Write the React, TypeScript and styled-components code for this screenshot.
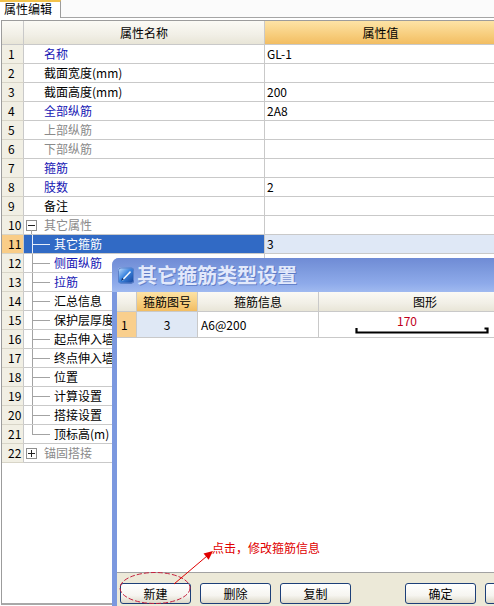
import React from "react"
import styled, { createGlobalStyle, css } from "styled-components"

type Tone = "blue" | "black" | "gray"

interface PropRow {
  name: string
  tone: Tone
  value?: string
  toggle?: "open" | "closed"
  child?: boolean
  last?: boolean
  selected?: boolean
}

const propRows: PropRow[] = [
  { name: "名称", tone: "blue", value: "GL-1" },
  { name: "截面宽度(mm)", tone: "black" },
  { name: "截面高度(mm)", tone: "black", value: "200" },
  { name: "全部纵筋", tone: "blue", value: "2A8" },
  { name: "上部纵筋", tone: "gray" },
  { name: "下部纵筋", tone: "gray" },
  { name: "箍筋", tone: "blue" },
  { name: "肢数", tone: "blue", value: "2" },
  { name: "备注", tone: "black" },
  { name: "其它属性", tone: "gray", toggle: "open" },
  { name: "其它箍筋", tone: "blue", child: true, selected: true, value: "3" },
  { name: "侧面纵筋", tone: "blue", child: true },
  { name: "拉筋", tone: "blue", child: true },
  { name: "汇总信息", tone: "black", child: true },
  { name: "保护层厚度", tone: "black", child: true },
  { name: "起点伸入墙", tone: "black", child: true },
  { name: "终点伸入墙", tone: "black", child: true },
  { name: "位置", tone: "black", child: true },
  { name: "计算设置", tone: "black", child: true },
  { name: "搭接设置", tone: "black", child: true },
  { name: "顶标高(m)", tone: "black", child: true, last: true },
  { name: "锚固搭接", tone: "gray", toggle: "closed" },
]

const toneColor: Record<Tone, string> = {
  blue: "#1616b4",
  black: "#000",
  gray: "#8a8a8a",
}

const GlobalStyle = createGlobalStyle`
  *, *::before, *::after { box-sizing: border-box; }
  html, body { margin: 0; padding: 0; background: #fff; overflow: hidden; }
  body {
    font-family: "Noto Sans CJK SC", "Liberation Sans", sans-serif;
    font-size: 12px;
    color: #000;
  }
`

const Page = styled.div`
  position: relative;
  width: 494px;
  height: 606px;
  overflow: hidden;
  background: #fff;
  font-family: "Noto Sans CJK SC", "Liberation Sans", sans-serif;
  font-size: 12px;
`

/* ---------- tab strip ---------- */

const TabStrip = styled.div`
  display: flex;
  height: 18px;
`

const Tab = styled.div`
  width: 61px;
  height: 18px;
  padding-left: 4px;
  border-top: 2px solid #f2c24c;
  border-right: 1px solid #9c9c9c;
  background: #fff;
  font-size: 12px;
  line-height: 14px;
`

const TabFill = styled.div`
  flex: 1;
  border-bottom: 1px solid #a5a5a5;
  background: #fbfbfb;
`

/* ---------- property grid ---------- */

const Grid = styled.div`
  margin: 2px 0 0 1px;
  width: 496px;
  height: 585px;
  border: 1px solid #9c9c9c;
  border-right: none;
  border-bottom: 2px solid #a8a8a8;
`

const GridRow = styled.div<{ $header?: boolean }>`
  display: grid;
  grid-template-columns: 22px 241px 1fr;
  height: ${(p) => (p.$header ? "24px" : "19px")};
`

const cellBase = css`
  display: flex;
  align-items: center;
  overflow: hidden;
  white-space: nowrap;
  border-right: 1px solid #c9c9c9;
  border-bottom: 1px solid #c9c9c9;
  line-height: 14px;
`

const HeadCell = styled.div<{ $accent?: boolean }>`
  ${cellBase};
  justify-content: center;
  background: ${(p) =>
    p.$accent
      ? "linear-gradient(#fde3a6, #f7cd7c 60%, #f2bd62)"
      : "linear-gradient(#fbfaf5, #f1efe6 60%, #e8e5d7)"};
`

const NumCell = styled.div<{ $active?: boolean }>`
  ${cellBase};
  padding-left: 6px;
  background: ${(p) => (p.$active ? "#f9cd88" : "#f1efe4")};
  border-bottom-color: #d8d5c8;
`

const NameCell = styled.div<{ $tone: Tone; $selected?: boolean; $top?: boolean }>`
  ${cellBase};
  align-items: stretch;
  padding-left: ${(p) => (p.$top ? "20px" : "0")};
  color: ${(p) => (p.$selected ? "#fff" : toneColor[p.$tone])};
  background: ${(p) => (p.$selected ? "#316ac5" : "#fff")};
  > span.label {
    display: flex;
    align-items: center;
  }
`

const ValueCell = styled.div<{ $selected?: boolean }>`
  ${cellBase};
  padding-left: 2px;
  background: ${(p) => (p.$selected ? "#dfe8f6" : "#fff")};
`

const Guide = styled.span<{ $last?: boolean; $selected?: boolean }>`
  position: relative;
  width: 22px;
  margin-left: 8px;
  flex: none;
  &::before {
    content: "";
    position: absolute;
    left: 0;
    top: 0;
    bottom: ${(p) => (p.$last ? "50%" : "-1px")};
    width: 1px;
    background: ${(p) => (p.$selected ? "#e8eefa" : "#a3a3a3")};
  }
  &::after {
    content: "";
    position: absolute;
    left: 0;
    top: 50%;
    width: 18px;
    height: 1px;
    background: ${(p) => (p.$selected ? "#e8eefa" : "#a3a3a3")};
  }
`

const ToggleWrap = styled.span<{ $open?: boolean }>`
  position: relative;
  display: flex;
  align-items: center;
  width: 11px;
  margin: 0 7px 0 2px;
  flex: none;
  &::after {
    content: "";
    display: ${(p) => (p.$open ? "block" : "none")};
    position: absolute;
    left: 5px;
    top: calc(50% + 5px);
    bottom: -1px;
    width: 1px;
    background: #a3a3a3;
  }
`

const ToggleBox = styled.span<{ $open?: boolean }>`
  position: relative;
  width: 11px;
  height: 11px;
  border: 1px solid #8e8e8e;
  background: #fff;
  &::before {
    content: "";
    position: absolute;
    left: 1px;
    right: 1px;
    top: 4px;
    height: 1px;
    background: #222;
  }
  &::after {
    content: "";
    display: ${(p) => (p.$open ? "none" : "block")};
    position: absolute;
    top: 1px;
    bottom: 1px;
    left: 4px;
    width: 1px;
    background: #222;
  }
`

/* ---------- dialog ---------- */

const Dialog = styled.div`
  position: absolute;
  left: 112px;
  top: 258px;
  width: 420px;
  display: flex;
  flex-direction: column;
  border-radius: 7px 0 0 0;
  overflow: hidden;
  background: #7b98df;
`

const TitleBar = styled.div`
  height: 34px;
  display: flex;
  align-items: center;
  gap: 3px;
  padding-left: 6px;
  background: linear-gradient(#6f8bd5, #7d9ade 35%, #8eaaea 75%, #a0baf0);
`

const DialogTitle = styled.span`
  font-size: 20px;
  font-weight: bold;
  line-height: 22px;
  color: #e2e9fb;
  text-shadow: 1px 1px 0 rgba(45, 75, 160, 0.45);
`

const DialogBody = styled.div`
  margin-left: 5px;
  display: flex;
  flex-direction: column;
  background: #fff;
`

const InnerRow = styled.div<{ $header?: boolean }>`
  display: grid;
  grid-template-columns: 20px 61px 121px 1fr;
  height: ${(p) => (p.$header ? "20px" : "26px")};
`

const InnerNum = styled.div`
  ${cellBase};
  padding-left: 4px;
  background: #f9cf8d;
`

const InnerCell = styled.div<{ $center?: boolean; $picked?: boolean }>`
  ${cellBase};
  justify-content: ${(p) => (p.$center ? "center" : "flex-start")};
  padding-left: ${(p) => (p.$center ? "0" : "3px")};
  background: ${(p) => (p.$picked ? "#dfe8f5" : "#fff")};
`

const ShapeCell = styled.div`
  ${cellBase};
  flex-direction: column;
  align-items: flex-start;
  justify-content: center;
  padding-left: 36px;
`

const Dimension = styled.span`
  margin-left: 42px;
  color: #c0001a;
  font-size: 12px;
  line-height: 12px;
`

const EmptyArea = styled.div`
  height: 235px;
  border-bottom: 1px solid #a2a2a2;
`

const ButtonBar = styled.div`
  display: flex;
  height: 40px;
  padding: 10px 0 0 3px;
  gap: 9px;
  background: #ece9d8;
`

const Button = styled.button<{ $spaced?: boolean }>`
  width: 71px;
  height: 21px;
  flex: none;
  margin-left: ${(p) => (p.$spaced ? "45px" : "0")};
  padding: 0;
  border: 1px solid #1d3f78;
  border-radius: 3px;
  background: linear-gradient(#ffffff, #f6f5f0 60%, #dcd8c8);
  font-family: "Noto Sans CJK SC", "Liberation Sans", sans-serif;
  font-size: 12px;
  line-height: 14px;
  color: #000;
`

/* ---------- annotation ---------- */

const Overlay = styled.svg`
  position: absolute;
  left: 0;
  top: 0;
  pointer-events: none;
`

const Note = styled.span`
  position: absolute;
  left: 212px;
  top: 541px;
  color: #e00000;
  font-size: 12px;
  line-height: 14px;
  white-space: nowrap;
`

const AppIcon = () => (
  <svg width="16" height="17" viewBox="0 0 16 17">
    <defs>
      <linearGradient id="ico" x1="0" y1="0" x2="1" y2="1">
        <stop offset="0" stopColor="#cfe6ff" />
        <stop offset="0.45" stopColor="#3d86e0" />
        <stop offset="1" stopColor="#123f96" />
      </linearGradient>
    </defs>
    <rect x="0" y="0.5" width="16" height="16" rx="3" fill="url(#ico)" />
    <rect x="0.5" y="1" width="15" height="15" rx="2.5" fill="none" stroke="#5a80c8" />
    <path d="M3.5 13 L12 4 L13 5.2 L5 13.5 Z" fill="#f4f8ff" />
    <path d="M3 13.8 L4.2 10.8 L6 12.6 Z" fill="#0b2f70" />
  </svg>
)

const App = () => {
  return (
    <Page>
      <GlobalStyle />
      <TabStrip>
        <Tab>属性编辑</Tab>
        <TabFill />
      </TabStrip>

      <Grid>
        <GridRow $header>
          <HeadCell />
          <HeadCell>属性名称</HeadCell>
          <HeadCell $accent>属性值</HeadCell>
        </GridRow>
        {propRows.map((row, i) => (
          <GridRow key={row.name}>
            <NumCell $active={row.selected}>{i + 1}</NumCell>
            <NameCell $tone={row.tone} $selected={row.selected} $top={!row.child && !row.toggle}>
              {row.toggle && (
                <ToggleWrap $open={row.toggle === "open"}>
                  <ToggleBox $open={row.toggle === "open"} />
                </ToggleWrap>
              )}
              {row.child && <Guide $last={row.last} $selected={row.selected} />}
              <span className="label">{row.name}</span>
            </NameCell>
            <ValueCell $selected={row.selected}>{row.value}</ValueCell>
          </GridRow>
        ))}
      </Grid>

      <Dialog>
        <TitleBar>
          <AppIcon />
          <DialogTitle>其它箍筋类型设置</DialogTitle>
        </TitleBar>
        <DialogBody>
          <InnerRow $header>
            <HeadCell />
            <HeadCell $accent>箍筋图号</HeadCell>
            <HeadCell>箍筋信息</HeadCell>
            <HeadCell>图形</HeadCell>
          </InnerRow>
          <InnerRow>
            <InnerNum>1</InnerNum>
            <InnerCell $center $picked>3</InnerCell>
            <InnerCell>A6@200</InnerCell>
            <ShapeCell>
              <Dimension>170</Dimension>
              <svg width="134" height="7" viewBox="0 0 134 7">
                <path d="M1.5 1 V5.5 H132.5 V1.5 H129.5" fill="none" stroke="#000" strokeWidth="2.2" />
              </svg>
            </ShapeCell>
          </InnerRow>
          <EmptyArea />
          <ButtonBar>
            <Button>新建</Button>
            <Button>删除</Button>
            <Button>复制</Button>
            <Button $spaced>确定</Button>
            <Button aria-label="取消" />
          </ButtonBar>
        </DialogBody>
      </Dialog>

      <Overlay width="494" height="606" viewBox="0 0 494 606">
        <ellipse cx="155" cy="588" rx="35" ry="15.5" fill="none" stroke="#c4213f" strokeWidth="1" strokeDasharray="5 2" />
        <line x1="174" y1="584" x2="207" y2="556" stroke="#e00000" strokeWidth="1" />
        <polygon points="213,551 208.6,559.8 203.5,553.6" fill="#e00000" />
      </Overlay>
      <Note>点击，修改箍筋信息</Note>
    </Page>
  )
}

export default App
